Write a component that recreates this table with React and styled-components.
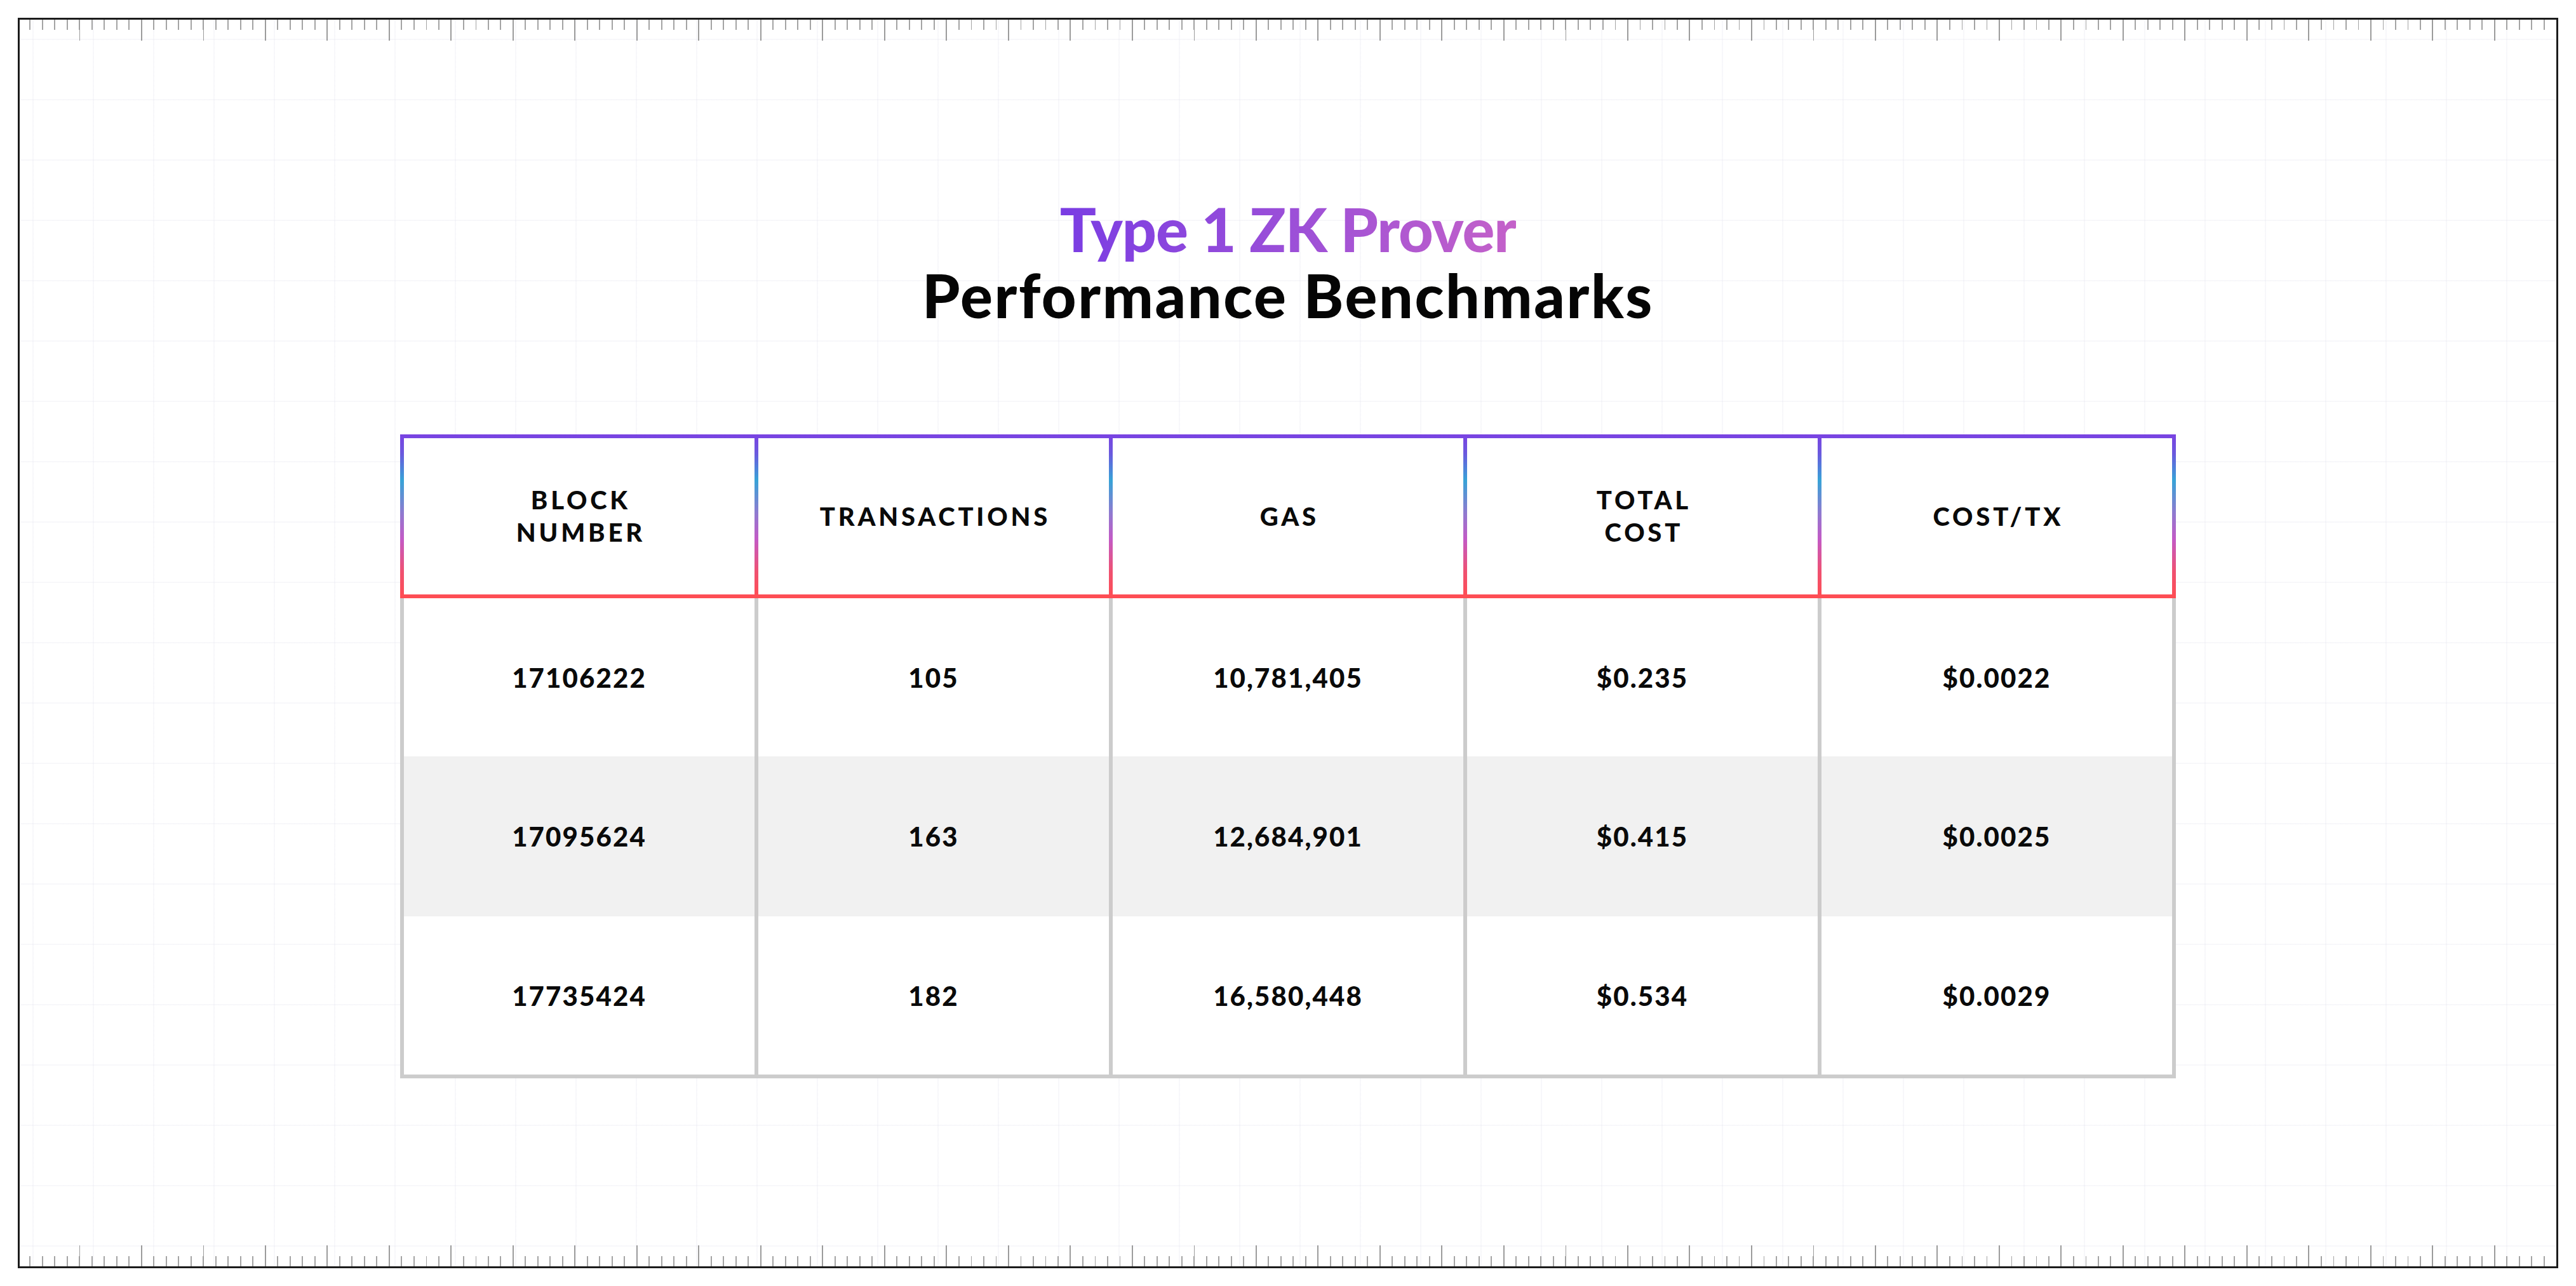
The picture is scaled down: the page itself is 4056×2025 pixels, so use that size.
import React from "react";
import styled, { createGlobalStyle } from "styled-components";

const GlobalStyle = createGlobalStyle`
  html, body {
    margin: 0;
    padding: 0;
    background: #ffffff;
  }
  body {
    font-family: Lato, "Liberation Sans", sans-serif;
    color: #0a0a0a;
  }
`;

const Page = styled.div`
  width: 4056px;
  height: 2025px;
  padding: 28px;
  box-sizing: border-box;
  background: #ffffff;
`;

const Frame = styled.div`
  height: 100%;
  box-sizing: border-box;
  border: 3px solid #1c1c1c;
  display: flex;
  flex-direction: column;
  background-color: #ffffff;
  background-image:
    linear-gradient(90deg, rgba(228, 228, 238, 0.28) 2px, transparent 2px),
    linear-gradient(180deg, rgba(228, 228, 238, 0.28) 2px, transparent 2px);
  background-size: 95px 95px;
  background-position: 20px 30px;
`;

const Ruler = styled.div`
  height: 33px;
  flex: none;
  background-image:
    repeating-linear-gradient(90deg, transparent 0 95.5px, #9c9c9c 95.5px 97.5px),
    repeating-linear-gradient(90deg, transparent 0 17.5px, #a4a4a4 17.5px 19.5px);
  background-size: 100% 33px, 100% 16px;
  background-repeat: no-repeat;
  background-position: ${(p) =>
    p.bottom ? "-2px bottom, -2px bottom" : "-2px top, -2px top"};
`;

const Main = styled.main`
  flex: 1;
  display: flex;
  flex-direction: column;
  align-items: center;
  padding-top: 244px;
`;

const Heading = styled.h1`
  margin: 0;
  display: flex;
  flex-direction: column;
  align-items: center;
  font-size: 95px;
  line-height: 104px;
  font-weight: 900;
`;

const Accent = styled.span`
  letter-spacing: -1px;
  background: linear-gradient(90deg, #7a3de3 0%, #9b4fd8 50%, #c461c9 100%);
  -webkit-background-clip: text;
  background-clip: text;
  color: transparent;
`;

const Plain = styled.span`
  letter-spacing: 2.6px;
  color: #050505;
`;

const Table = styled.div`
  margin-top: 168px;
  width: 2796px;
`;

const HeadRow = styled.div`
  display: grid;
  grid-template-columns: repeat(5, 1fr);
  gap: 6px;
  padding: 6px;
  background: linear-gradient(
    180deg,
    #7a42e2 0%,
    #6a5ade 12%,
    #37a3d7 28%,
    #8f7ad0 48%,
    #c35ac6 64%,
    #f05170 84%,
    #ff4d52 100%
  );
`;

const HeadCell = styled.div`
  height: 246px;
  background: #ffffff;
  display: flex;
  align-items: center;
  justify-content: center;
  text-align: center;
  font-size: 40px;
  line-height: 51px;
  font-weight: 900;
  letter-spacing: 0.12em;
  padding-left: 0.12em;
`;

const Body = styled.div`
  display: grid;
  grid-template-columns: repeat(5, 1fr);
  column-gap: 6px;
  padding: 0 6px 6px;
  background: #cccccc;
`;

const Cell = styled.div`
  height: ${(p) => p.h}px;
  background: ${(p) => (p.shade ? "#f1f1f1" : "#ffffff")};
  display: flex;
  align-items: center;
  justify-content: center;
  font-size: 42px;
  font-weight: 900;
  letter-spacing: 0.05em;
`;

const headers = [
  ["BLOCK", "NUMBER"],
  ["TRANSACTIONS"],
  ["GAS"],
  ["TOTAL", "COST"],
  ["COST/TX"],
];

const rows = [
  { h: 249, values: ["17106222", "105", "10,781,405", "$0.235", "$0.0022"] },
  { h: 252, values: ["17095624", "163", "12,684,901", "$0.415", "$0.0025"], shade: true },
  { h: 249, values: ["17735424", "182", "16,580,448", "$0.534", "$0.0029"] },
];

export default function App() {
  return (
    <>
      <GlobalStyle />
      <Page>
        <Frame>
          <Ruler />
          <Main>
            <Heading>
              <Accent>Type 1 ZK Prover</Accent>
              <Plain>Performance Benchmarks</Plain>
            </Heading>
            <Table>
              <HeadRow>
                {headers.map((lines) => (
                  <HeadCell key={lines.join(" ")}>
                    <div>
                      {lines.map((l) => (
                        <div key={l}>{l}</div>
                      ))}
                    </div>
                  </HeadCell>
                ))}
              </HeadRow>
              <Body>
                {rows.map((row) =>
                  row.values.map((v, i) => (
                    <Cell key={row.values[0] + i} h={row.h} shade={row.shade}>
                      {v}
                    </Cell>
                  ))
                )}
              </Body>
            </Table>
          </Main>
          <Ruler bottom />
        </Frame>
      </Page>
    </>
  );
}
